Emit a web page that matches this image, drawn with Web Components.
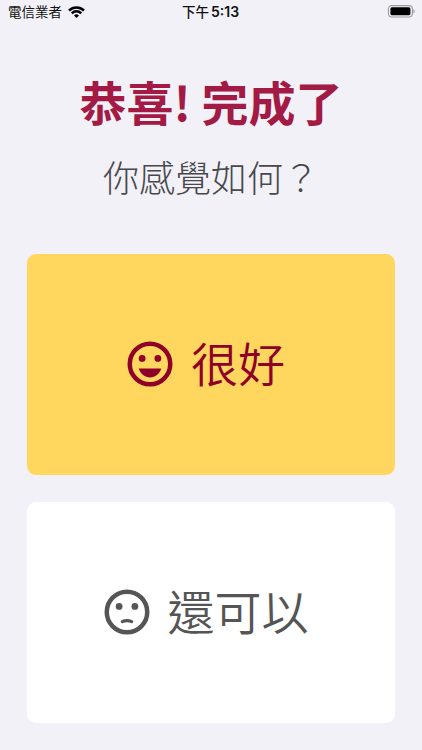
<!DOCTYPE html>
<html lang="zh-Hant">
<head>
<meta charset="UTF-8">
<meta name="viewport" content="width=device-width, initial-scale=1">
<title>完成了</title>
<style>
    html, body {
        margin: 0;
        height: 100%;
        background: #f2f1f8;
    }
    body {
        font-family: Inter, "Noto Sans CJK TC", sans-serif;
        overflow: hidden;
    }
</style>
</head>
<body>
<feedback-screen>
    <status-bar slot="status" carrier="電信業者" time="5:13" period="下午"></status-bar>
    <page-heading slot="heading">
        恭喜! 完成了
        <span slot="question">你感覺如何？</span>
    </page-heading>
    <mood-card mood="good" selected>很好</mood-card>
    <mood-card mood="okay">還可以</mood-card>
</feedback-screen>

<script>
class FeedbackScreen extends HTMLElement {
    constructor() {
        super();
        this.attachShadow({ mode: 'open' });
    }

    connectedCallback() {
        this.shadowRoot.innerHTML = `
            <style>
                :host {
                    display: flex;
                    flex-direction: column;
                    height: 750px;
                }
                main {
                    display: grid;
                    grid-template-rows: 221px 221px;
                    gap: 27px;
                    padding: 0 27px;
                }
            </style>
            <slot name="status"></slot>
            <slot name="heading"></slot>
            <main><slot></slot></main>
        `;
    }
}
customElements.define('feedback-screen', FeedbackScreen);

class StatusBar extends HTMLElement {
    constructor() {
        super();
        this.attachShadow({ mode: 'open' });
    }

    connectedCallback() {
        this.shadowRoot.innerHTML = `
            <style>
                :host {
                    display: grid;
                    grid-template-columns: 1fr auto 1fr;
                    align-items: center;
                    height: 24px;
                    padding: 0 7px 0 8px;
                    font-size: 13.5px;
                    line-height: 24px;
                    color: #111;
                }
                .carrier, .time {
                    display: flex;
                    align-items: center;
                }
                .carrier { gap: 6px; }
                .time {
                    gap: 2px;
                    padding-right: 2px;
                    font-weight: 500;
                }
                .time span + span {
                    font-size: 14px;
                    font-weight: 600;
                }
                .battery { justify-self: end; }
                svg { display: block; }
            </style>
            <div class="carrier">
                <span>${this.getAttribute('carrier')}</span>
                <svg width="17" height="12" viewBox="0 0 17 12" fill="none" stroke="#000" stroke-width="2.5">
                    <path d="M1 4.5a10.6 10.6 0 0 1 15 0"/>
                    <path d="M3.8 7.3a6.6 6.6 0 0 1 9.4 0"/>
                    <path d="M8.5 12 6 9.4a3.6 3.6 0 0 1 5 0z" fill="#000" stroke="none"/>
                </svg>
            </div>
            <div class="time"><span>${this.getAttribute('period')}</span><span>${this.getAttribute('time')}</span></div>
            <svg class="battery" width="28" height="14" viewBox="0 0 28 14">
                <rect x="1.4" y=".6" width="24" height="11.4" rx="3.4" fill="none" stroke="#9c9ba1" stroke-width="1.1"/>
                <rect x="3.4" y="2.3" width="20" height="8" rx="1.6" fill="#000"/>
                <path d="M26.4 4.2c1.7.7 1.7 3.5 0 4.2z" fill="#9c9ba1"/>
            </svg>
        `;
    }
}
customElements.define('status-bar', StatusBar);

class PageHeading extends HTMLElement {
    constructor() {
        super();
        this.attachShadow({ mode: 'open' });
    }

    connectedCallback() {
        this.shadowRoot.innerHTML = `
            <style>
                :host {
                    display: block;
                    box-sizing: border-box;
                    height: 230px;
                    padding-top: 42px;
                    text-align: center;
                    font-family: "Noto Sans CJK TC", sans-serif;
                }
                h1 {
                    margin: 0;
                    font-size: 47px;
                    line-height: 70px;
                    font-weight: 700;
                    color: #a31a45;
                }
                p {
                    margin: 10px 0 0;
                    font-size: 36px;
                    line-height: 60px;
                    font-weight: 300;
                    color: #48484c;
                }
            </style>
            <h1><slot></slot></h1>
            <p><slot name="question"></slot></p>
        `;
    }
}
customElements.define('page-heading', PageHeading);

const FACES = {
    good: '<path d="M7 14h10c-.78 2.34-2.72 4-5 4s-4.22-1.66-5-4z"/>',
    okay: '<path d="M9.9 16.3q2.1-1 4.2 0" fill="none" stroke="currentColor" stroke-width="1.4" stroke-linecap="round"/>'
};

class MoodCard extends HTMLElement {
    constructor() {
        super();
        this.attachShadow({ mode: 'open' });
    }

    connectedCallback() {
        this.shadowRoot.innerHTML = `
            <style>
                :host {
                    display: flex;
                    align-items: center;
                    justify-content: center;
                    gap: 14px;
                    padding-right: 14px;
                    border-radius: 9px;
                    background: #fff;
                    color: #555;
                    font: 350 47px/70px "Noto Sans CJK TC", sans-serif;
                }
                :host([selected]) {
                    background: #ffd65e;
                    color: #8e0229;
                }
                svg {
                    display: block;
                    margin-bottom: 1px;
                }
                span { margin-top: -6px; }
            </style>
            <svg width="54" height="54" viewBox="0 0 24 24" fill="currentColor">
                <circle cx="12" cy="12" r="9" fill="none" stroke="currentColor" stroke-width="2"/>
                <circle cx="8.5" cy="9.5" r="1.5"/>
                <circle cx="15.5" cy="9.5" r="1.5"/>
                ${FACES[this.getAttribute('mood')]}
            </svg>
            <span><slot></slot></span>
        `;
    }
}
customElements.define('mood-card', MoodCard);
</script>
</body>
</html>
